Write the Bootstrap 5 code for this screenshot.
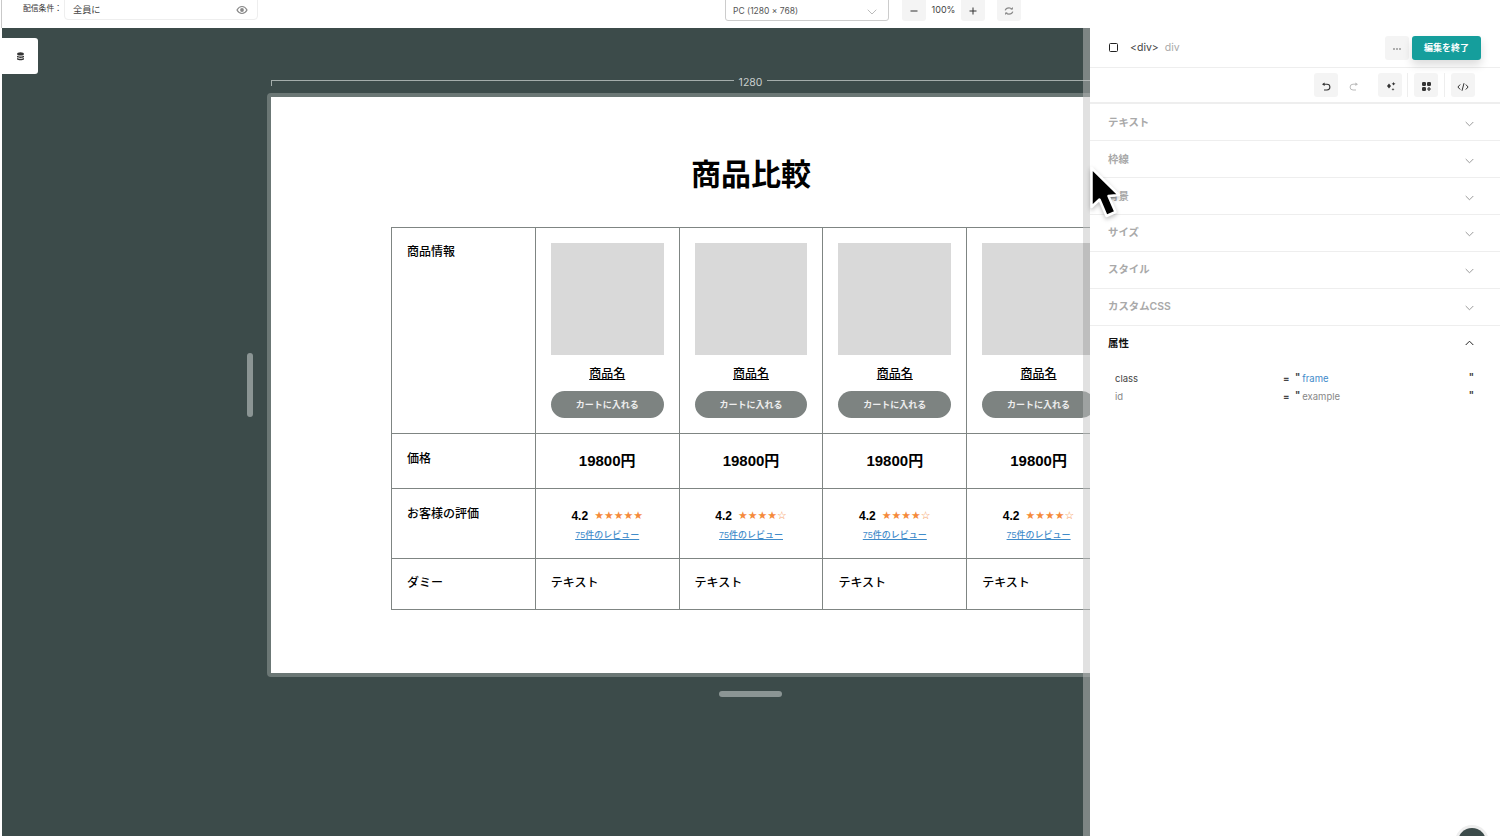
<!DOCTYPE html>
<html lang="ja">
<head>
<meta charset="utf-8">
<title>商品比較</title>
<link href="https://cdn.jsdelivr.net/npm/bootstrap@5.3.0/dist/css/bootstrap.min.css" rel="stylesheet">
<style>
html,body{height:836px;overflow:hidden;background:#fff}
body{font-family:Inter,"Noto Sans CJK JP",sans-serif;color:#222;position:relative}
.app-shell{height:836px;width:1500px}
.top-strip{height:28px;flex:none;margin-left:1px;border-left:1px solid #c9c9c9;overflow:hidden}
.cond-label{font-size:7.8px;margin:3px 0 0 21px;width:41px;color:#333;line-height:10px;white-space:nowrap}
.cond-input{width:194px;height:30px;margin-top:-10px;border:1px solid #eee;border-radius:4px;padding:10px 9px 0 8px;font-size:9.2px;color:#444}
.cond-input span{line-height:18px}
.device-select{width:164px;height:31px;margin:-10px 0 0 467px;border:1px solid #ccc;border-radius:3px;padding:10px 11px 0 7px;font-size:8.5px;color:#555;line-height:20px}
.tool-sq{width:24px;height:24px;background:#f4f4f4;border-radius:3px;flex:none;border:0;padding:0}
.top-strip .tool-sq{margin-top:-3px}
.zoom-val{width:35px;font-size:9px;text-align:center;line-height:20px;color:#444}
.work-area{height:808px}
.canvas-zone{flex:1 1 auto;min-width:0;margin-left:2px;background:#3c4b4a;overflow:hidden;position:relative;padding:52px 0 0 265px}
.ruler-row{width:958px;margin-left:4px;height:13px;flex:none;gap:5px;align-items:flex-start}
.ruler-line{flex:1;height:6px;border-top:1px solid #a4adab}
.ruler-line.tick-left{border-left:1px solid #a4adab}
.ruler-line.run-on{margin-right:-40px}
.ruler-num{font-size:10.5px;line-height:13px;color:#c9cfcd;margin-top:-4px}
.frame-box{width:968px;height:584px;flex:none;border:4px solid #6b7775;border-radius:4px;background:#fff;text-align:center}
.frame-title{font-size:30px;font-weight:700;line-height:36px;margin:60px 0 34px;color:#000;font-family:"Liberation Sans","Noto Sans CJK JP",sans-serif}
.compare-tb{width:720px;table-layout:fixed;border-collapse:collapse;margin:0 auto;font-family:"Liberation Sans","Noto Sans CJK JP",sans-serif;color:#000;font-size:12px;line-height:18px}
.compare-tb th,.compare-tb td{border:1px solid #7f8583;padding:15px;vertical-align:top;text-align:left;font-weight:500}
.row-info{height:206px}.row-price{height:55px}.row-rate{height:70px}.row-dummy{height:51px}
.row-price th,.row-rate th{padding-top:16px}
.ph-img{height:112px;background:#d9d9d9}
.prod-name{display:block;text-align:center;color:#000;text-decoration:underline;margin-top:10px;line-height:18px}
.cart-btn{display:block;width:100%;height:27px;margin-top:8px;border:0;border-radius:14px;background:#7d8381;color:#eee;font-size:9px;font-weight:700;padding:1px 0 0;line-height:26px}
.compare-tb .price-cell{text-align:center;font-size:15px;font-weight:700;line-height:20px;padding-top:17px}
.rate-line{gap:6px;line-height:18px;justify-content:center;margin-top:3px}
.rate-val{font-weight:700}
.rate-stars{font-size:10.9px;color:#f58a3a;font-family:"DejaVu Sans",sans-serif;line-height:18px;white-space:nowrap;letter-spacing:0}
.review-link{display:block;text-align:center;color:#3f8bca;font-size:9px;line-height:13px;margin-top:4px;text-decoration:underline}
.scroll-strip{position:absolute;right:0;top:0;bottom:0;width:7px;background:rgba(194,194,194,.49)}
.scroll-thumb{position:absolute;right:0;top:215px;height:112px;width:7px;background:rgba(120,120,120,.18)}
.layer-tab{position:absolute;left:0;top:10px;width:36px;height:36px;background:#fff;border-radius:0 3px 3px 0}
.grip-v{position:absolute;left:245px;top:325px;width:6px;height:64px;border-radius:3px;background:#8b9594}
.grip-h{position:absolute;left:717px;top:663px;width:63px;height:6px;border-radius:3px;background:#8b9594}
.side-panel{width:410px;flex:none;background:#fff}
.head-row{height:40px;border-bottom:1px solid #eee;padding:0 19px 0 19px}
.sel-box{width:9px;height:9px;border:1.4px solid #222;border-radius:1.5px;margin-right:12px}
.tag-name{font-size:10.5px;color:#444;margin-right:6px}
.tag-sub{font-size:10.5px;color:#aaa}
.end-btn{width:69px;height:24px;margin-left:3px;border:0;border-radius:3px;background:#159e9c;color:#fff;font-size:9px;font-weight:700;padding:0;box-shadow:0 5px 10px rgba(0,0,0,.14)}
.tool-row{height:36px;border-bottom:2px solid #eee;padding:0 25px 0 0}
.tool-plain{background:transparent}
.v-sep{width:1px;height:24px;background:#eee;margin:0 6px}
.v-sep.sep-narrow{margin-left:5px}
.acc-row{height:37px;border-bottom:1px solid #eee;padding:0 26px 2px 18px;font-size:10.4px;font-weight:600;color:#a9a9a9}
.acc-row span{margin-top:2px}
.acc-row svg{margin-top:3px}
.acc-row.shift-row{padding-bottom:0}
.acc-row.open-row{border-bottom:0;color:#111;height:36px}
.acc-row.open-row svg{margin-top:0}
.attr-list{padding:8px 24px 0 25px;font-size:9.5px;color:#444}
.attr-row{height:18px;line-height:18px}
.attr-key{width:168px}
.attr-eq{width:12px;font-weight:700}
.attr-q{font-weight:700;color:#444;margin-right:2px;margin-top:-2px}
.attr-link{color:#3f8bca}
.attr-plain{color:#888}
.pointer-mark{position:absolute;left:1086px;top:164px;width:36px;height:56px;filter:drop-shadow(0 2px 2px rgba(0,0,0,.25))}
.help-dot{position:absolute;left:1458px;top:828px;width:28px;height:28px;border-radius:50%;background:#3c4b4a;box-shadow:0 0 0 3px #eee}
</style>
</head>
<body>
<div class="app-shell d-flex flex-column">
  <div class="top-strip d-flex align-items-start">
    <div class="cond-label">配信条件：</div>
    <div class="cond-input d-flex justify-content-between align-items-start bg-white">
      <span>全員に</span>
      <svg class="mt-1" width="12" height="10" viewBox="0 0 12 10"><path d="M1 5c1.300-2.400 3-3.500 5-3.500S9.700 2.600 11 5C9.700 7.400 8 8.500 6 8.500S2.300 7.400 1 5z" fill="none" stroke="#888" stroke-width="1.200"/><circle cx="6" cy="5" r="1.900" fill="#888"/></svg>
    </div>
    <div class="device-select d-flex justify-content-between bg-white">
      <span>PC (1280 × 768)</span>
      <svg class="mt-2" width="10" height="6" viewBox="0 0 10 6"><path d="M.7.7 5 5 9.300.7" fill="none" stroke="#bbb"/></svg>
    </div>
    <button class="tool-sq" style="margin-left:13px"><svg width="10" height="10" viewBox="0 0 10 10"><path d="M1.500 5h7" stroke="#333" stroke-width="1"/></svg></button>
    <div class="zoom-val">100%</div>
    <button class="tool-sq"><svg width="10" height="10" viewBox="0 0 10 10"><path d="M1.500 5h7M5 1.500v7" stroke="#333" stroke-width="1"/></svg></button>
    <button class="tool-sq" style="margin-left:12px"><svg width="10" height="10" viewBox="0 0 10 10"><path d="M1.200 4.300C1.700 2.600 3.200 1.800 5 1.800c1.200 0 2.200.5 2.900 1.300M8.800 5.700C8.300 7.400 6.800 8.200 5 8.200 3.800 8.200 2.800 7.700 2.100 6.900" fill="none" stroke="#888" stroke-width="1.200"/><path d="M8.900 1v2.600H6.400M1.100 9V6.400h2.500" fill="#888"/></svg></button>
  </div>
  <div class="work-area d-flex">
    <div class="canvas-zone d-flex flex-column">
      <div class="layer-tab d-flex align-items-center justify-content-center">
        <svg width="9" height="9" viewBox="0 0 9 9"><ellipse cx="4.500" cy="1.900" rx="3.400" ry="1.700" fill="#333"/><path d="M1 3.700c1 1 6 1 7 0v1.300c-1 1.200-6 1.200-7 0zM1 6c1 1 6 1 7 0v1.200c-1 1.400-6 1.400-7 0z" fill="#333"/></svg>
      </div>
      <div class="ruler-row d-flex">
        <div class="ruler-line tick-left"></div>
        <div class="ruler-num">1280</div>
        <div class="ruler-line"></div>
      </div>
      <div class="frame-box">
        <h1 class="frame-title">商品比較</h1>
        <table class="compare-tb">
          <tr class="row-info">
            <th>商品情報</th>
            <td><div class="ph-img"></div><a class="prod-name" href="#">商品名</a><button class="cart-btn">カートに入れる</button></td>
            <td><div class="ph-img"></div><a class="prod-name" href="#">商品名</a><button class="cart-btn">カートに入れる</button></td>
            <td><div class="ph-img"></div><a class="prod-name" href="#">商品名</a><button class="cart-btn">カートに入れる</button></td>
            <td><div class="ph-img"></div><a class="prod-name" href="#">商品名</a><button class="cart-btn">カートに入れる</button></td>
          </tr>
          <tr class="row-price">
            <th>価格</th>
            <td class="price-cell">19800円</td>
            <td class="price-cell">19800円</td>
            <td class="price-cell">19800円</td>
            <td class="price-cell">19800円</td>
          </tr>
          <tr class="row-rate">
            <th>お客様の評価</th>
            <td><div class="rate-line d-flex"><span class="rate-val">4.2</span><span class="rate-stars">★★★★★</span></div><a class="review-link" href="#">75件のレビュー</a></td>
            <td><div class="rate-line d-flex"><span class="rate-val">4.2</span><span class="rate-stars">★★★★☆</span></div><a class="review-link" href="#">75件のレビュー</a></td>
            <td><div class="rate-line d-flex"><span class="rate-val">4.2</span><span class="rate-stars">★★★★☆</span></div><a class="review-link" href="#">75件のレビュー</a></td>
            <td><div class="rate-line d-flex"><span class="rate-val">4.2</span><span class="rate-stars">★★★★☆</span></div><a class="review-link" href="#">75件のレビュー</a></td>
          </tr>
          <tr class="row-dummy">
            <th>ダミー</th><td>テキスト</td><td>テキスト</td><td>テキスト</td><td>テキスト</td>
          </tr>
        </table>
      </div>
      <div class="grip-v"></div>
      <div class="grip-h"></div>
      <div class="scroll-strip"><div class="scroll-thumb"></div></div>
    </div>
    <aside class="side-panel">
      <div class="head-row d-flex align-items-center">
        <span class="sel-box"></span><span class="tag-name">&lt;div&gt;</span><span class="tag-sub">div</span>
        <button class="tool-sq ms-auto"><svg width="10" height="10" viewBox="0 0 10 10"><circle cx="2" cy="5" r=".7" fill="#333"/><circle cx="5" cy="5" r=".7" fill="#333"/><circle cx="8" cy="5" r=".7" fill="#333"/></svg></button>
        <button class="end-btn">編集を終了</button>
      </div>
      <div class="tool-row d-flex align-items-center justify-content-end">
        <button class="tool-sq"><svg width="10" height="10" viewBox="0 0 10 10"><path d="M2 2.200h4a2.700 2.700 0 0 1 0 5.800H3" fill="none" stroke="#333" stroke-width="1.100"/><path d="M3.600.4v3.600L1 2.200z" fill="#333"/></svg></button>
        <button class="tool-sq tool-plain" style="margin-left:4px"><svg width="10" height="10" viewBox="0 0 10 10"><path d="M8 2.200H4a2.700 2.700 0 0 0 0 5.800h3" fill="none" stroke="#bbb" stroke-width="1"/><path d="M6.400.4v3.600L9 2.200z" fill="#bbb"/></svg></button>
        <button class="tool-sq" style="margin-left:12px"><svg width="11" height="11" viewBox="0 0 11 11"><path d="M4 2.500 6 5 4 7.500 2 5zM8.500 1l.7 1.300 1.300.5-1.300.6-.7 1.200-.6-1.200-1.300-.6 1.300-.5zM8 7l.5 1 1 .4-1 .4-.5 1-.5-1-1-.4 1-.4z" fill="#333"/></svg></button>
        <span class="v-sep sep-narrow"></span>
        <button class="tool-sq"><svg width="11" height="11" viewBox="0 0 11 11"><rect x="1" y="1" width="4" height="4" rx="1.200" fill="#333"/><rect x="6" y="1" width="4" height="4" rx="1.200" fill="#333"/><rect x="1" y="6" width="4" height="4" rx="1.200" fill="#333"/><path d="M8 6v4M6 8h4" stroke="#333" stroke-width="1.200"/></svg></button>
        <span class="v-sep"></span>
        <button class="tool-sq"><svg width="12" height="10" viewBox="0 0 12 10"><path d="M3.200 2.500.9 5l2.300 2.500M8.800 2.500 11.100 5 8.800 7.500M7 1.200 5 8.800" fill="none" stroke="#333" stroke-width="1"/></svg></button>
      </div>
      <div class="acc-row shift-row d-flex align-items-center justify-content-between"><span>テキスト</span><svg width="9" height="6" viewBox="0 0 9 6"><path d="M.7 1 4.500 4.800 8.300 1" fill="none" stroke="#999"/></svg></div>
      <div class="acc-row shift-row d-flex align-items-center justify-content-between"><span>枠線</span><svg width="9" height="6" viewBox="0 0 9 6"><path d="M.7 1 4.500 4.800 8.300 1" fill="none" stroke="#999"/></svg></div>
      <div class="acc-row shift-row d-flex align-items-center justify-content-between"><span>背景</span><svg width="9" height="6" viewBox="0 0 9 6"><path d="M.7 1 4.500 4.800 8.300 1" fill="none" stroke="#999"/></svg></div>
      <div class="acc-row d-flex align-items-center justify-content-between"><span>サイズ</span><svg width="9" height="6" viewBox="0 0 9 6"><path d="M.7 1 4.500 4.800 8.300 1" fill="none" stroke="#999"/></svg></div>
      <div class="acc-row d-flex align-items-center justify-content-between"><span>スタイル</span><svg width="9" height="6" viewBox="0 0 9 6"><path d="M.7 1 4.500 4.800 8.300 1" fill="none" stroke="#999"/></svg></div>
      <div class="acc-row d-flex align-items-center justify-content-between"><span>カスタムCSS</span><svg width="9" height="6" viewBox="0 0 9 6"><path d="M.7 1 4.500 4.800 8.300 1" fill="none" stroke="#999"/></svg></div>
      <div class="acc-row open-row d-flex align-items-center justify-content-between"><span>属性</span><svg width="9" height="6" viewBox="0 0 9 6"><path d="M.7 5 4.500 1.200 8.300 5" fill="none" stroke="#222"/></svg></div>
      <div class="attr-list">
        <div class="attr-row d-flex"><span class="attr-key">class</span><span class="attr-eq">=</span><span class="attr-q">"</span><span class="attr-link flex-grow-1">frame</span><span class="attr-q">"</span></div>
        <div class="attr-row d-flex"><span class="attr-key attr-plain">id</span><span class="attr-eq">=</span><span class="attr-q">"</span><span class="attr-plain flex-grow-1">example</span><span class="attr-q">"</span></div>
      </div>
    </aside>
  </div>
</div>
<svg class="pointer-mark" viewBox="0 0 36 56"><path d="M5.500 4 5.500 43 13.500 35.500 20.500 52 29.500 48 22.500 32 33 31z" fill="#000" stroke="#fff" stroke-width="2.500" stroke-linejoin="round"/></svg>
<div class="help-dot"></div>
<script src="https://cdn.jsdelivr.net/npm/bootstrap@5.3.0/dist/js/bootstrap.bundle.min.js"></script>
</body>
</html>
